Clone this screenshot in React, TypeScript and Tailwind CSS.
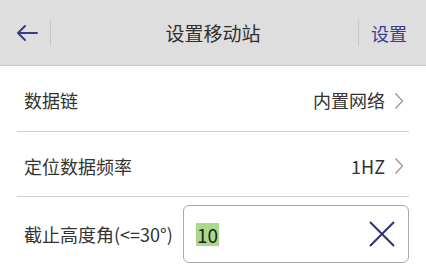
const Chevron = () => (
  <svg width="10" height="18" viewBox="0 0 10 18" className="ml-[9px]">
    <polyline points="1.5,1.5 8.5,9 1.5,16.5" fill="none" stroke="#9a9a9a" strokeWidth="1.4" />
  </svg>
);

export default function App() {
  return (
    <div
      className="w-[426px] h-[267px] overflow-hidden bg-white text-[#333333]"
      style={{ fontFamily: '"Noto Sans CJK SC", "Noto Sans", sans-serif' }}
    >
      {/* Header */}
      <div className="h-[66px] bg-[#dedede] border-b border-[#c9c9c9] flex items-center">
        <div className="w-[50px] flex justify-center pl-[4px]">
          <svg width="24" height="18" viewBox="0 0 24 18">
            <path d="M22 9H3M10 2L3 9l7 7" fill="none" stroke="#3b3b8e" strokeWidth="2" strokeLinecap="round" strokeLinejoin="round" />
          </svg>
        </div>
        <div className="w-px h-[26px] bg-[#c6c6c6]" />
        <div className="flex-1 pl-[17px] text-center text-[19px] leading-none text-[#2f2f2f]">设置移动站</div>
        <div className="w-px h-[26px] bg-[#c6c6c6]" />
        <div className="w-[67px] pl-[12px] text-[18px] leading-none text-[#3c3c8e]">设置</div>
      </div>

      {/* Rows */}
      <div className="mx-[17px]">
        <div className="h-[66px] border-b border-[#cfcfcf] flex items-center justify-between pl-[7px] pr-[5px] pt-[4px]">
          <span className="text-[18px]">数据链</span>
          <span className="flex items-center text-[18px]">
            内置网络
            <Chevron />
          </span>
        </div>
        <div className="h-[65px] border-b border-[#cfcfcf] flex items-center justify-between pl-[7px] pr-[5px] pt-[4px]">
          <span className="text-[18px]">定位数据频率</span>
          <span className="flex items-center text-[18px]">
            1HZ
            <Chevron />
          </span>
        </div>
        <div className="flex items-center pt-[8px]">
          <span className="w-[166px] pl-[7px] text-[18px] whitespace-nowrap">截止高度角(&lt;=30°)</span>
          <div className="flex-1 h-[58px] border border-[#a9a9a9] rounded-[6px] flex items-center justify-between pl-[12px] pr-[12px]">
            <span className="bg-[#a9d98b] text-[19px] leading-[23px] px-[1px] text-[#222]">10</span>
            <svg width="28" height="28" viewBox="0 0 28 28">
              <path d="M2 2L26 26M26 2L2 26" fill="none" stroke="#2e2e80" strokeWidth="2" />
            </svg>
          </div>
        </div>
      </div>
    </div>
  );
}
